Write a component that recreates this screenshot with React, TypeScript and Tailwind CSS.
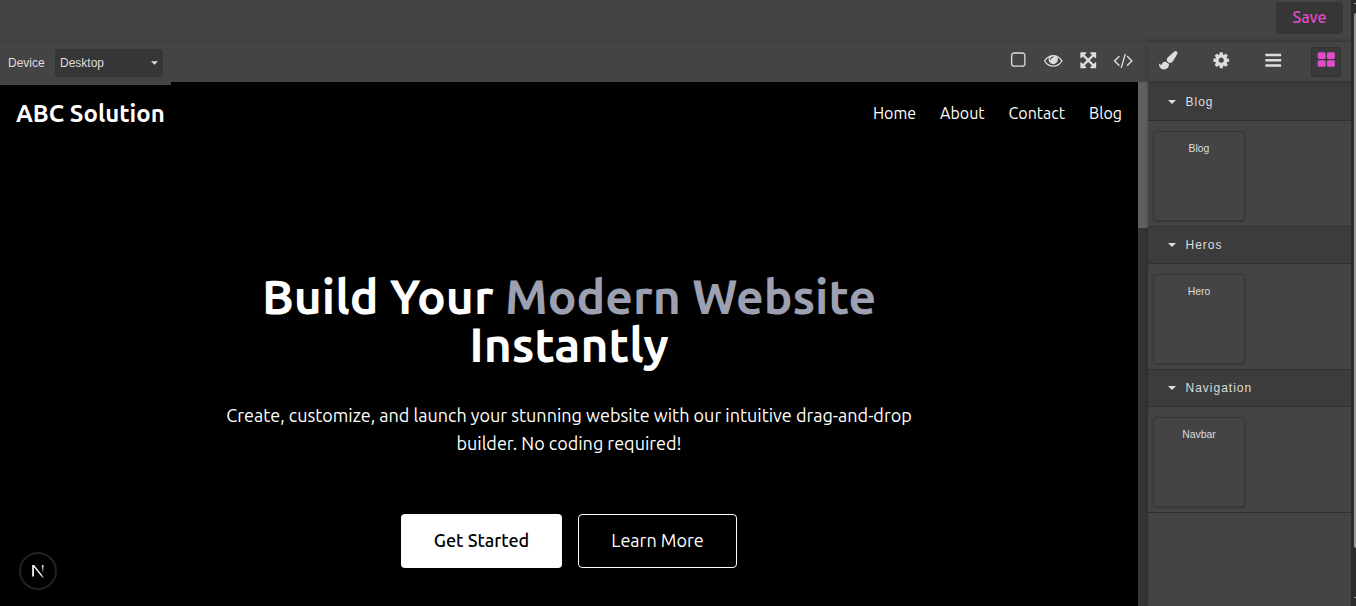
import type { ReactNode } from "react";

const ICONS = {
  square:
    "M1312 256h-832q-66 0-113 47t-47 113v832q0 66 47 113t113 47h832q66 0 113-47t47-113v-832q0-66-47-113t-113-47zm288 160v832q0 119-84.5 203.5t-203.5 84.5h-832q-119 0-203.5-84.5t-84.5-203.5v-832q0-119 84.5-203.5t203.5-84.5h832q119 0 203.5 84.5t84.5 203.5z",
  eye: "M1664 960q-152-236-381-353 61 104 61 225 0 185-131.5 316.5t-316.5 131.5-316.5-131.5-131.5-316.5q0-121 61-225-229 117-381 353 133 205 333.5 326.5t434.5 121.5 434.5-121.5 333.5-326.5zm-720-384q0-20-14-34t-34-14q-125 0-214.5 89.5t-89.5 214.5q0 20 14 34t34 14 34-14 14-34q0-86 61-147t147-61q20 0 34-14t14-34zm848 384q0 34-20 69-140 230-376.5 368.5t-499.5 138.5-499.5-139-376.5-368q-20-35-20-69t20-69q140-229 376.5-368t499.5-139 499.5 139 376.5 368q20 35 20 69z",
  arrows:
    "M1411 541l-355 355 355 355 144-144q29-31 70-14 39 17 39 59v448q0 26-19 45t-45 19h-448q-42 0-59-40-17-39 14-69l144-144-355-355-355 355 144 144q31 30 14 69-17 40-59 40h-448q-26 0-45-19t-19-45v-448q0-42 40-59 39-17 69 14l144 144 355-355-355-355-144 144q-19 19-45 19-12 0-24-5-40-17-40-59v-448q0-26 19-45t45-19h448q42 0 59 40 17 39-14 69l-144 144 355 355 355-355-144-144q-31-30-14-69 17-40 59-40h448q26 0 45 19t19 45v448q0 42-39 59-13 5-25 5-26 0-45-19z",
  code: "M553 1399l-50 50q-10 10-23 10t-23-10l-466-466q-10-10-10-23t10-23l466-466q10-10 23-10t23 10l50 50q10 10 10 23t-10 23l-393 393 393 393q10 10 10 23t-10 23zm591-1067l-373 1291q-4 13-15.5 19.5t-23.5 2.5l-62-17q-13-4-19.5-15.5t-2.5-24.5l373-1291q4-13 15.5-19.5t23.5-2.5l62 17q13 4 19.5 15.5t2.5 24.5zm657 651l-466 466q-10 10-23 10t-23-10l-50-50q-10-10-10-23t10-23l393-393-393-393q-10-10-10-23t10-23l50-50q10-10 23-10t23 10l466 466q10 10 10 23t-10 23z",
  brush:
    "M1615 0q70 0 122.5 46.5t52.5 116.5q0 63-45 151-332 629-465 752-97 91-218 91-126 0-216.5-92.5t-90.5-219.5q0-128 92-212l638-579q59-54 130-54zm-909 1034q39 76 106.5 130t150.5 76l1 71q4 213-129.5 347t-348.5 134q-123 0-218-46.5t-152.5-127.5-86.5-183-29-220q7 5 41 30t62 44.5 59 36.5 46 17q41 0 55-37 25-66 57.5-112.5t69.5-76 88-47.5 103-25.5 125-10.5z",
  cog: "M1152 896q0-106-75-181t-181-75-181 75-75 181 75 181 181 75 181-75 75-181zm512-109v222q0 12-8 23t-20 13l-185 28q-19 54-39 91 35 50 107 138 10 12 10 25t-9 23q-27 37-99 108t-94 71q-12 0-26-9l-138-108q-44 23-91 38-16 136-29 186-7 28-36 28h-222q-14 0-24.5-8.5t-11.5-21.5l-28-184q-49-16-90-37l-141 107q-10 9-25 9-14 0-25-11-126-114-165-168-7-10-7-23 0-12 8-23 15-21 51-66.5t54-70.5q-27-50-41-99l-183-27q-13-2-21-12.5t-8-23.5v-222q0-12 8-23t19-13l186-28q14-46 39-92-40-57-107-138-10-12-10-24 0-10 9-23 26-36 98.5-107.5t94.5-71.5q13 0 26 10l138 107q44-23 91-38 16-136 29-186 7-28 36-28h222q14 0 24.5 8.5t11.5 21.5l28 184q49 16 90 37l142-107q9-9 24-9 13 0 25 10 129 119 165 170 7 8 7 22 0 12-8 23-15 21-51 66.5t-54 70.5q26 50 41 98l183 28q13 2 21 12.5t8 23.5z",
  bars: "M1664 1344v128q0 26-19 45t-45 19h-1408q-26 0-45-19t-19-45v-128q0-26 19-45t45-19h1408q26 0 45 19t19 45zm0-512v128q0 26-19 45t-45 19h-1408q-26 0-45-19t-19-45v-128q0-26 19-45t45-19h1408q26 0 45 19t19 45zm0-512v128q0 26-19 45t-45 19h-1408q-26 0-45-19t-19-45v-128q0-26 19-45t45-19h1408q26 0 45 19t19 45z",
  blocks:
    "M832 1024v384q0 52-38 90t-90 38h-512q-52 0-90-38t-38-90v-384q0-52 38-90t90-38h512q52 0 90 38t38 90zm0-768v384q0 52-38 90t-90 38h-512q-52 0-90-38t-38-90v-384q0-52 38-90t90-38h512q52 0 90 38t38 90zm896 768v384q0 52-38 90t-90 38h-512q-52 0-90-38t-38-90v-384q0-52 38-90t90-38h512q52 0 90 38t38 90zm0-768v384q0 52-38 90t-90 38h-512q-52 0-90-38t-38-90v-384q0-52 38-90t90-38h512q52 0 90 38t38 90z",
};

function Icon({ name }: { name: keyof typeof ICONS }) {
  return (
    <svg viewBox="0 0 1792 1792" className="size-[18.5px] shrink-0 overflow-visible" fill="currentColor">
      <path d={ICONS[name]} />
    </svg>
  );
}

function PanelButton({ children, active }: { children: ReactNode; active?: boolean }) {
  return (
    <button
      className={
        active
          ? "flex h-[30px] w-[30px] justify-center rounded-[2px] bg-[#3a3a3a] pt-[4.4px] text-[#e24bc9] shadow-[0_0_3px_rgba(0,0,0,0.25)_inset]"
          : "flex h-[30px] w-[30px] justify-center pt-[5px]"
      }
    >
      {children}
    </button>
  );
}

function Category({ title, block }: { title: string; block: string }) {
  return (
    <section className="h-[143px] border-b border-[#303030]">
      <h3 className="flex h-[37px] items-center border-b border-[#303030] bg-[#3c3c3c] pl-5 text-xs tracking-[1px]">
        <svg viewBox="0 0 8 4" className="mr-[9.5px] h-1 w-2" fill="currentColor">
          <path d="M0 0h8L4 4z" />
        </svg>
        {title}
      </h3>
      <div className="px-[5px] pt-[10px]">
        <div className="h-[90px] w-[92px] rounded-[3px] border border-[#363636] pt-[9px] text-center text-[10.4px] leading-4 shadow-[0_1px_2px_rgba(0,0,0,0.2)]">
          {block}
        </div>
      </div>
    </section>
  );
}

const NAV = ["Home", "About", "Contact", "Blog"];

export default function App() {
  return (
    <div className="flex h-[606px] w-[1356px] overflow-hidden bg-[#444] font-['Liberation_Sans',sans-serif] text-[#ddd]">
      <div className="flex w-[1351px] flex-col">
        <header className="flex h-[42px] shrink-0 justify-end pt-[2px] pr-2 shadow-[inset_0_-3px_3px_-2px_rgba(0,0,0,0.12)]">
          <button className="h-8 w-[67px] rounded bg-[#363636] pb-[2px] font-['Ubuntu','Noto_Sans',sans-serif] text-base font-[550] text-[#e24bc9]">
            Save
          </button>
        </header>
        <div className="flex min-h-0 flex-1">
          <main className="flex w-[1148px] flex-col">
            <div className="flex h-10 shrink-0 justify-between">
              <div className="relative z-10 flex h-[43px] w-[171px] items-start bg-[#444] pt-[7px] pl-2 text-xs">
                <span className="w-[47px] leading-7">Device</span>
                <div className="flex h-7 w-[108px] items-center justify-between rounded-[2px] bg-[#363636] pr-[5px] pl-[5px]">
                  <span>Desktop</span>
                  <svg viewBox="0 0 8 4" className="h-1 w-[7px]" fill="currentColor">
                    <path d="M0 0h8L4 4z" />
                  </svg>
                </div>
              </div>
              <div className="flex gap-[5px] pt-1 pr-[10px]">
                <PanelButton><Icon name="square" /></PanelButton>
                <PanelButton><Icon name="eye" /></PanelButton>
                <PanelButton><Icon name="arrows" /></PanelButton>
                <PanelButton><Icon name="code" /></PanelButton>
              </div>
            </div>
            <div className="flex min-h-0 flex-1">
              <div className="relative w-[1138px] bg-black font-['Ubuntu','Noto_Sans',sans-serif] text-white">
                <nav className="flex h-16 items-center justify-between px-4 pb-px">
                  <div className="text-2xl font-semibold whitespace-nowrap">ABC Solution</div>
                  <div className="flex gap-6 pb-[2px] text-base">
                    {NAV.map((label) => (
                      <a key={label}>{label}</a>
                    ))}
                  </div>
                </nav>
                <section className="flex flex-col items-center pt-[126px] text-center">
                  <h1 className="text-5xl leading-[48px] font-semibold whitespace-nowrap">
                    Build Your <span className="text-[#9ca0b0]">Modern Website</span>
                    <br />
                    Instantly
                  </h1>
                  <p className="mt-[33px] text-lg leading-7 whitespace-nowrap">
                    Create, customize, and launch your stunning website with our intuitive drag-and-drop
                    <br />
                    builder. No coding required!
                  </p>
                  <div className="mt-[57px] flex gap-4 text-lg">
                    <button className="h-[54px] w-[161px] rounded bg-white pb-[2px] font-[550] text-black">Get Started</button>
                    <button className="h-[54px] w-[159px] rounded border border-white pb-[2px]">Learn More</button>
                  </div>
                </section>
                <div className="absolute bottom-4 left-[19px] flex size-[38px] items-center justify-center rounded-full border-2 border-[#222] bg-black">
                  <svg viewBox="0 0 14 14" className="size-[14px]" fill="none">
                    <defs>
                      <linearGradient id="stem" x1="0" y1="0" x2="0" y2="1">
                        <stop stopColor="#fff" />
                        <stop offset="1" stopColor="#fff" stopOpacity="0" />
                      </linearGradient>
                      <linearGradient id="slash" x1="0" y1="0" x2="1" y2="1">
                        <stop offset=".75" stopColor="#fff" />
                        <stop offset="1" stopColor="#fff" stopOpacity=".2" />
                      </linearGradient>
                    </defs>
                    <path d="M1.2 12.6V1h1.9L13 13.6l-1 .8L2.9 3v9.6z" fill="url(#slash)" />
                    <path d="M10.9 1h1.6v8h-1.6z" fill="url(#stem)" />
                  </svg>
                </div>
              </div>
              <div className="w-[10px] bg-[#353535]">
                <div className="h-[146px] bg-[#606060]" />
              </div>
            </div>
          </main>
          <aside className="w-[203px] bg-[#444] shadow-[0_0_5px_rgba(0,0,0,0.2)]">
            <div className="flex h-10 justify-between border-b border-[#383838] pt-[5px] pr-[10px] pl-[5px]">
              <div className="-mt-px ml-[0.5px] flex gap-[22.5px]">
                <PanelButton><Icon name="brush" /></PanelButton>
                <PanelButton><Icon name="cog" /></PanelButton>
                <PanelButton><Icon name="bars" /></PanelButton>
              </div>
              <PanelButton active><Icon name="blocks" /></PanelButton>
            </div>
            <div className="border-t-2 border-[#363636]">
              <Category title="Blog" block="Blog" />
              <Category title="Heros" block="Hero" />
              <Category title="Navigation" block="Navbar" />
            </div>
          </aside>
        </div>
      </div>
      <div className="flex w-[5px] flex-col bg-[#2c2c2c] pt-[3px] pl-[3px]">
        <div className="h-px bg-[#9a9a9a]" />
        <div className="mt-[9px] h-[535px] rounded-l bg-[#9a9a9a]" />
        <div className="mt-[49px] h-px bg-[#9a9a9a]" />
      </div>
    </div>
  );
}
